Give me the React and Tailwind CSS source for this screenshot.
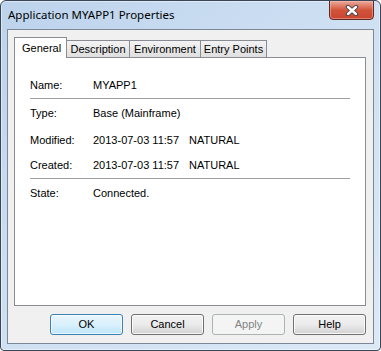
import React from 'react';

const tabs = ['General', 'Description', 'Environment', 'Entry Points'];
const tabWidths = ['w-[53px]', 'w-[63px]', 'w-[71px]', 'w-[66px]'];

function CloseGlyph() {
  return (
    <svg width="14" height="11" viewBox="0 0 14 11">
      <path d="M3 2 L11 9 M11 2 L3 9" stroke="#3a3f4a" strokeWidth="4.2" strokeLinecap="round" />
      <path d="M3 2 L11 9 M11 2 L3 9" stroke="#ffffff" strokeWidth="2.4" strokeLinecap="round" />
    </svg>
  );
}

function Row({ label, children, className }) {
  return (
    <div className={`flex items-center ${className}`}>
      <span className="w-[63px]">{label}</span>
      {children}
    </div>
  );
}

function Button({ children, variant }) {
  const styles = {
    focus: 'border-[#3c7fb1] bg-gradient-to-b from-[#eaf6fd] via-[#d9f0fc] to-[#bee6fd] text-black shadow-[inset_0_0_0_1px_rgba(255,255,255,0.7)]',
    normal: 'border-[#707070] bg-gradient-to-b from-[#f2f2f2] via-[#ebebeb] to-[#d2d2d2] text-black shadow-[inset_0_0_0_1px_rgba(255,255,255,0.8)]',
    disabled: 'border-[#adb2b5] bg-[#f4f4f4] text-[#838383]',
  };
  return (
    <div className={`w-[73px] h-[21px] rounded-[3px] border flex items-center justify-center ${styles[variant]}`}>
      {children}
    </div>
  );
}

export default function App() {
  return (
    <div
      className="w-[381px] h-[351px] flex flex-col rounded-t-[6px] rounded-b-[4px] border border-[#3a4656] bg-gradient-to-br from-[#bcd3ec] via-[#cfe0f3] to-[#dbe9f7] overflow-hidden shadow-[inset_0_0_0_1px_rgba(255,255,255,0.45)]"
      style={{ fontFamily: '"Liberation Sans", Arial, sans-serif' }}
    >
      {/* Title bar */}
      <div className="h-[28px] shrink-0 flex items-start relative">
        <span
          className="pl-[7px] pt-[6px] text-[11.5px] text-black leading-[16px]"
          style={{ fontFamily: '"Noto Sans", "Open Sans", sans-serif' }}
        >
          Application MYAPP1 Properties
        </span>
        <div className="ml-auto mr-[6px] -mt-px w-[45px] h-[20px] rounded-b-[4px] border border-[#5c2a24] bg-gradient-to-b from-[#e9a99b] via-[#d3533a] to-[#c8452f] flex items-center justify-center shadow-[inset_0_0_0_1px_rgba(255,200,190,0.45)]">
          <CloseGlyph />
        </div>
      </div>

      {/* Client area */}
      <div className="flex-1 mx-[6px] mb-[6px] border border-[#7d8896] bg-[#f0f0f0] flex flex-col pt-[7px] pl-[6px] pr-[7px] text-[11px] text-black">
        {/* Tabs */}
        <div className="flex items-end h-[20px]">
          {tabs.map((t, i) => (
            <div
              key={t}
              className={
                i === 0
                  ? `${tabWidths[i]} h-[21px] -mb-px relative z-10 bg-white border border-b-0 border-[#898c95] flex items-center pl-[7px]`
                  : `${tabWidths[i]} h-[17px] bg-gradient-to-b from-[#f3f3f3] to-[#dfdfdf] border border-l-0 border-b-0 border-[#898c95] flex items-center justify-center`
              }
            >
              {t}
            </div>
          ))}
        </div>

        {/* Panel */}
        <div className="h-[249px] bg-white border border-[#898c95] pt-[15px] pl-[15px] pr-[15px]">
          <Row label="Name:" className="h-[25px]">
            <span>MYAPP1</span>
          </Row>
          <div className="border-t border-[#a0a0a0]" />
          <Row label="Type:" className="h-[28px]">
            <span>Base (Mainframe)</span>
          </Row>
          <Row label="Modified:" className="h-[26px]">
            <span className="w-[96px]">2013-07-03 11:57</span>
            <span>NATURAL</span>
          </Row>
          <Row label="Created:" className="h-[25px]">
            <span className="w-[96px]">2013-07-03 11:57</span>
            <span>NATURAL</span>
          </Row>
          <div className="border-t border-[#a0a0a0]" />
          <Row label="State:" className="h-[28px]">
            <span>Connected.</span>
          </Row>
        </div>

        {/* Buttons */}
        <div className="flex justify-end gap-[8px] mt-[8px]">
          <Button variant="focus">OK</Button>
          <Button variant="normal">Cancel</Button>
          <Button variant="disabled">Apply</Button>
          <Button variant="normal">Help</Button>
        </div>
      </div>
    </div>
  );
}
